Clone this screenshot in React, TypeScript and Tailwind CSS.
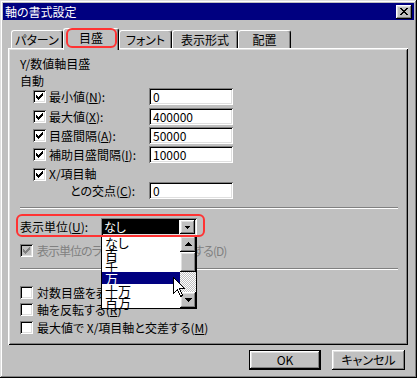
import React from 'react';

const raised = 'shadow-[inset_-1px_-1px_#000,inset_1px_1px_#fff,inset_-2px_-2px_#808080,inset_2px_2px_#dfdfdf]';
const sunken = 'shadow-[inset_1px_1px_#808080,inset_-1px_-1px_#fff,inset_2px_2px_#000,inset_-2px_-2px_#dfdfdf]';

// win98 check mark, pixel rows [x, y, w]
const checkPixels = [
  [6, 0, 1], [5, 1, 2], [0, 2, 1], [4, 2, 3], [0, 3, 2], [3, 3, 3], [0, 4, 5], [1, 5, 3], [2, 6, 1],
];
const closePixels = [
  [0, 0, 2], [6, 0, 2], [1, 1, 2], [5, 1, 2], [2, 2, 4], [3, 3, 2], [2, 4, 4], [1, 5, 2], [5, 5, 2], [0, 6, 2], [6, 6, 2],
];

const Pixels: React.FC<{ px: number[][]; w: number; h: number; color: string }> = ({ px, w, h, color }) => (
  <svg width={w} height={h} viewBox={`0 0 ${w} ${h}`} shapeRendering="crispEdges">
    {px.map(([x, y, len], i) => (
      <rect key={i} x={x} y={y} width={len} height={1} fill={color} />
    ))}
  </svg>
);

const CheckBox: React.FC<{ checked?: boolean; disabled?: boolean }> = ({ checked, disabled }) => (
  <span className={`w-[13px] h-[13px] shrink-0 flex items-center justify-center ${sunken} ${disabled ? 'bg-[#c0c0c0]' : 'bg-white'}`}>
    {checked && <Pixels px={checkPixels} w={7} h={7} color={disabled ? '#808080' : '#000'} />}
  </span>
);

const TextBox: React.FC<{ value: string }> = ({ value }) => (
  <div className={`w-[84px] h-[17px] bg-white ${sunken} pl-[4px] flex items-center`}>{value}</div>
);

const Arrow: React.FC<{ up?: boolean; small?: boolean }> = ({ up, small }) => {
  const w = small ? 5 : 7;
  const h = small ? 3 : 4;
  const d = up ? `M0 ${h} L${w} ${h} L${w / 2} 0 Z` : `M0 0 L${w} 0 L${w / 2} ${h} Z`;
  return (
    <svg width={w} height={h} viewBox={`0 0 ${w} ${h}`} shapeRendering="crispEdges">
      <path d={d} fill="#000" />
    </svg>
  );
};

const Tab: React.FC<{ label: string; width: string; active?: boolean }> = ({ label, width, active }) => (
  <div
    className={`${width} ${active ? 'h-[22px] -mb-[2px] z-10 pb-[3px]' : 'h-[18px]'} relative shrink-0 bg-[#c0c0c0] rounded-t-[3px] border-t border-l border-white border-r border-r-black shadow-[inset_-1px_0_#808080] flex items-center justify-center`}
  >
    {label}
    {active && <div className="absolute left-[2px] -top-px w-[51px] h-[20px] border-2 border-[#f33] rounded-[6px]" />}
  </div>
);

const Separator: React.FC<{ className: string }> = ({ className }) => (
  <div className={`${className} ml-[12px] w-[378px] h-[2px] border-t border-t-[#808080] border-b border-b-white`} />
);

const AutoRow: React.FC<{ className?: string; label: React.ReactNode; value: string }> = ({ className = '', label, value }) => (
  <div className={`${className} flex items-center h-[17px] ml-[25px]`}>
    <div className="w-[116px] flex items-center gap-[3px]">
      <CheckBox checked />
      <span>{label}</span>
    </div>
    <TextBox value={value} />
  </div>
);

const units = ['なし', '百', '千', '万', '十万', '百万'];

export default function App() {
  return (
    <div className={`w-[417px] h-[378px] bg-[#c0c0c0] p-[3px] flex flex-col text-[12px] leading-none text-black font-['Noto_Sans_CJK_JP',sans-serif] [font-feature-settings:'palt'] shadow-[inset_-1px_-1px_#000,inset_1px_1px_#dfdfdf,inset_-2px_-2px_#808080,inset_2px_2px_#fff]`}>
      {/* title bar */}
      <div className="h-[17px] bg-[#000080] flex items-center justify-between pl-[2px] pr-[2px]">
        <span className="text-white">軸の書式設定</span>
        <div className={`w-[16px] h-[14px] bg-[#c0c0c0] ${raised} flex items-center justify-center`}>
          <Pixels px={closePixels} w={8} h={7} color="#000" />
        </div>
      </div>

      <div className="ml-[5px]">
        {/* tabs */}
        <div className="mt-[8px] ml-[3px] h-[20px] flex items-end relative z-10">
          <Tab label="パターン" width="w-[52px]" />
          <Tab label="目盛" width="w-[56px]" active />
          <Tab label="フォント" width="w-[53px]" />
          <Tab label="表示形式" width="w-[66px]" />
          <Tab label="配置" width="w-[53px]" />
        </div>

        {/* panel */}
        <div className="relative w-[400px] h-[297px] bg-[#c0c0c0] shadow-[inset_1px_1px_#fff,inset_-1px_-1px_#000,inset_2px_2px_#dfdfdf,inset_-2px_-2px_#808080] flex flex-col">
          <div className="mt-[8px] ml-[12px] h-[16px] flex items-center">Y/数値軸目盛</div>
          <div className="mt-[2px] ml-[12px] h-[14px] flex items-center">自動</div>
          <AutoRow label={<>最小値(<u>N</u>):</>} value="0" />
          <AutoRow className="mt-[3px]" label={<>最大値(<u>X</u>):</>} value="400000" />
          <AutoRow className="mt-[2px]" label={<>目盛間隔(<u>A</u>):</>} value="50000" />
          <AutoRow className="mt-[2px]" label={<>補助目盛間隔(<u>I</u>):</>} value="10000" />
          <div className="mt-[3px] h-[16px] ml-[25px] flex items-center gap-[3px]">
            <CheckBox checked />
            <span>X/項目軸</span>
          </div>
          <div className="h-[17px] ml-[25px] flex items-center">
            <div className="w-[116px] pl-[37px]">
              との交点(<u>C</u>):
            </div>
            <TextBox value="0" />
          </div>

          <Separator className="mt-[8px]" />

          <div className="mt-[9px] h-[18px] ml-[12px] flex items-center relative z-20">
            <div className="w-[81px]">
              表示単位(<u>U</u>):
            </div>
            <div className={`relative w-[96px] h-[18px] bg-white ${sunken} p-[2px] flex`}>
              <div className="flex-1 bg-black text-white pl-[1px] mr-[1px] flex items-center">なし</div>
              <div className={`w-[15px] bg-[#c0c0c0] ${raised} flex items-center justify-center`}>
                <Arrow small />
              </div>

              {/* open list */}
              <div className="absolute left-0 top-[17px] w-[96px] h-[74px] bg-white border border-black flex">
                <div className="flex-1 flex flex-col">
                  {units.map((u) => (
                    <div
                      key={u}
                      className={`h-[12px] pl-[3px] flex items-center text-[13px] ${u === '万' ? 'bg-[#000080] text-white' : ''}`}
                    >
                      {u}
                    </div>
                  ))}
                </div>
                <div className="w-[16px] flex flex-col">
                  <div className={`h-[16px] bg-[#c0c0c0] ${raised} flex items-center justify-center`}>
                    <Arrow up />
                  </div>
                  <div className={`h-[20px] bg-[#c0c0c0] ${raised}`} />
                  <div className="h-[20px] bg-[repeating-conic-gradient(#c0c0c0_0_25%,#fff_0_50%)] bg-[length:2px_2px]" />
                  <div className={`h-[16px] bg-[#c0c0c0] ${raised} flex items-center justify-center`}>
                    <Arrow />
                  </div>
                </div>
              </div>

              {/* mouse cursor */}
              <svg className="absolute left-[72px] top-[59px] z-40" width="12" height="20" viewBox="0 0 12 20" shapeRendering="crispEdges">
                <path d="M0.5 0.5 L0.5 16.5 L4.5 12.5 L7.5 19.5 L9.5 18.5 L6.5 11.5 L11.5 11.5 Z" fill="#fff" stroke="#000" strokeWidth="1" />
              </svg>
            </div>
            <div className="absolute -left-[4px] -top-[4px] w-[189px] h-[23px] border-2 border-[#f33] rounded-[6px] z-30" />
          </div>

          <div className="mt-[8px] h-[13px] ml-[12px] flex items-center gap-[4px] text-[#808080]">
            <CheckBox checked disabled />
            <span className="tracking-[-1px]">表示単位のラベルをグラフに表示する(D)</span>
          </div>

          <Separator className="mt-[11px]" />

          <div className="mt-[16px] h-[13px] ml-[12px] flex items-center gap-[4px]">
            <CheckBox />
            <span>対数目盛を表示する(<u>L</u>)</span>
          </div>
          <div className="mt-[4px] h-[13px] ml-[12px] flex items-center gap-[4px]">
            <CheckBox />
            <span>軸を反転する(<u>R</u>)</span>
          </div>
          <div className="mt-[5px] h-[13px] ml-[12px] flex items-center gap-[4px]">
            <CheckBox />
            <span>最大値で X/項目軸と交差する(<u>M</u>)</span>
          </div>
        </div>
      </div>

      {/* buttons */}
      <div className="mt-[5px] pl-[246px] flex gap-[11px]">
        <div className="w-[72px] h-[20px] border border-black">
          <div className={`w-full h-full ${raised} flex items-center justify-center`}>OK</div>
        </div>
        <div className={`w-[73px] h-[20px] ${raised} flex items-center justify-center`}>キャンセル</div>
      </div>
    </div>
  );
}
